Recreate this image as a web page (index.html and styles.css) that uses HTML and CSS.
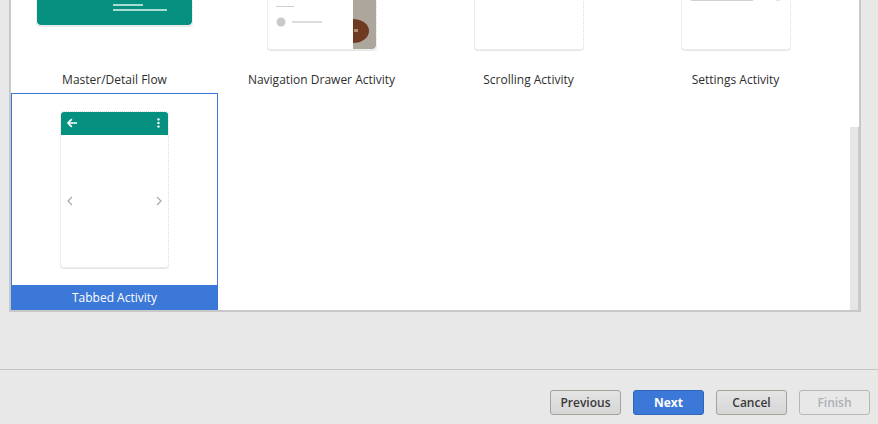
FILE: index.html
```html
<!DOCTYPE html>
<html>
<head>
<meta charset="utf-8">
<link rel="stylesheet" href="styles.css">
</head>
<body>
<div class="page">
  <div class="panel">
    <div class="scroll-area">
      <div class="grid">
        <div class="card">
          <div class="thumb-area">
            <div class="thumb thumb-land">
              <svg width="155" height="106" viewBox="0 0 155 106">
                <rect x="0" y="0" width="155" height="106" rx="4" fill="#06907f"/>
                <rect x="76" y="85" width="30" height="2" fill="#a9dbd5"/>
                <rect x="76" y="90" width="54" height="2" fill="#a9dbd5"/>
              </svg>
            </div>
          </div>
          <div class="label">Master/Detail Flow</div>
        </div>
        <div class="card">
          <div class="thumb-area">
            <div class="thumb thumb-port">
              <svg width="108" height="155" viewBox="0 0 108 155">
                <rect x="8" y="112" width="18" height="1" fill="#cfcfcf"/>
                <circle cx="13" cy="128" r="4.5" fill="#c9c9c9"/>
                <rect x="24" y="127" width="30" height="2" fill="#dcdcdc"/>
                <path d="M85 0 H104 A4 4 0 0 1 108 4 V151 A4 4 0 0 1 104 155 H85 Z" fill="#aca69d"/>
                <path d="M85 125 A16 12 0 0 1 85 149 Z" fill="#6e3a22"/>
                <rect x="86" y="135" width="4" height="3" fill="#b48a70"/>
              </svg>
            </div>
          </div>
          <div class="label">Navigation Drawer Activity</div>
        </div>
        <div class="card">
          <div class="thumb-area">
            <div class="thumb thumb-port"></div>
          </div>
          <div class="label">Scrolling Activity</div>
        </div>
        <div class="card">
          <div class="thumb-area">
            <div class="thumb thumb-port">
              <svg width="108" height="155" viewBox="0 0 108 155">
                <rect x="9" y="103" width="62" height="4" fill="#d2d2d2"/>
                <circle cx="96" cy="101" r="5" fill="none" stroke="#c4c4c4" stroke-width="1.2"/>
              </svg>
            </div>
          </div>
          <div class="label">Settings Activity</div>
        </div>
        <div class="card selected">
          <div class="thumb-area">
            <div class="thumb thumb-port tabbed">
              <div class="appbar">
                <svg class="icon" width="12" height="10" viewBox="0 0 12 10">
                  <path d="M11 5H2.2 M5.8 1.2 L2 5 L5.8 8.8" fill="none" stroke="#ffffff" stroke-width="1.7"/>
                </svg>
                <svg class="icon" width="3" height="10" viewBox="0 0 3 10">
                  <circle cx="1.5" cy="1.4" r="1.2" fill="#ffffff"/>
                  <circle cx="1.5" cy="5" r="1.2" fill="#ffffff"/>
                  <circle cx="1.5" cy="8.6" r="1.2" fill="#ffffff"/>
                </svg>
              </div>
              <div class="pager">
                <svg width="6" height="10" viewBox="0 0 6 10">
                  <path d="M5 1 L1 5 L5 9" fill="none" stroke="#a9a9a9" stroke-width="1.2"/>
                </svg>
                <svg width="6" height="10" viewBox="0 0 6 10">
                  <path d="M1 1 L5 5 L1 9" fill="none" stroke="#a9a9a9" stroke-width="1.2"/>
                </svg>
              </div>
            </div>
          </div>
          <div class="label">Tabbed Activity</div>
        </div>
      </div>
    </div>
    <div class="scrollbar"><div class="scroll-thumb"></div></div>
  </div>
  <div class="footer">
    <div class="buttons">
      <button class="btn">Previous</button>
      <button class="btn primary">Next</button>
      <button class="btn">Cancel</button>
      <button class="btn disabled">Finish</button>
    </div>
  </div>
</div>
</body>
</html>
```
FILE: styles.css
```css
html, body {
  margin: 0;
  padding: 0;
}
body {
  background: #e8e8e8;
  font-family: "Open Sans", "Noto Sans", sans-serif;
  font-size: 12px;
  color: #2e2e2e;
  width: 878px;
  height: 424px;
  overflow: hidden;
}
.page {
  display: flex;
  flex-direction: column;
  height: 424px;
}
.panel {
  margin-left: 9px;
  width: 852px;
  height: 312px;
  box-sizing: border-box;
  border: 2px solid #c8c8c8;
  border-top: none;
  background: #ffffff;
  display: flex;
  overflow: hidden;
}
.scroll-area {
  flex: 1;
  overflow: hidden;
}
.grid {
  display: grid;
  grid-template-columns: repeat(4, 207px);
  grid-auto-rows: 218px;
  margin-top: -125px;
}
.card {
  box-sizing: border-box;
  border: 1px solid transparent;
  display: flex;
  flex-direction: column;
  align-items: center;
  padding-top: 17px;
}
.card.selected {
  border-color: #3c78d8;
}
.thumb-area {
  width: 157px;
  height: 157px;
  display: flex;
  align-items: center;
  justify-content: center;
}
.thumb {
  border: 1px dotted #dcdcdc;
  border-radius: 4px;
  box-shadow: 0 1px 0 #e6e6e6;
  display: flex;
  flex-direction: column;
  overflow: hidden;
}
.thumb svg {
  display: block;
}
.thumb-land {
  width: 155px;
  height: 106px;
}
.thumb-port {
  width: 108px;
  height: 155px;
}
.tabbed {
  width: 107px;
}
.appbar {
  height: 24px;
  background: #06907f;
  margin: -1px -1px 0 -1px;
  border-radius: 4px 4px 0 0;
  display: flex;
  align-items: center;
  justify-content: space-between;
  padding: 0 9px 0 6px;
}
.icon {
  display: block;
}
.pager {
  flex: 1;
  display: flex;
  align-items: center;
  justify-content: space-between;
  padding: 0 6px;
}
.label {
  margin-top: auto;
  align-self: stretch;
  height: 25px;
  line-height: 26px;
  text-align: center;
  white-space: nowrap;
}
.card.selected .label {
  background: #3c78d8;
  color: #ffffff;
}
.scrollbar {
  width: 9px;
  display: flex;
  flex-direction: column;
}
.scroll-thumb {
  margin-top: 127px;
  flex: 1;
  background: #e6e6e6;
  border-right: 1px solid #cbcbcb;
}
.footer {
  margin-top: 57px;
  border-top: 1px solid #c4c4c4;
  padding: 20px 8px 0 0;
}
.buttons {
  display: flex;
  justify-content: flex-end;
  gap: 12px;
}
.btn {
  width: 71px;
  height: 25px;
  box-sizing: border-box;
  border: 1px solid #a6a199;
  border-radius: 3px;
  background: linear-gradient(#e4e4e4, #d6d6d6);
  font-family: "Open Sans", "Noto Sans", sans-serif;
  font-size: 12px;
  font-weight: 600;
  color: #3a3a3a;
  padding: 0;
}
.btn.primary {
  background: #3c78d8;
  border-color: #2f66b8;
  color: #ffffff;
  font-weight: 700;
}
.btn.disabled {
  background: #e8e8e8;
  border-color: #bab6b0;
  color: #aab2b5;
}
```
